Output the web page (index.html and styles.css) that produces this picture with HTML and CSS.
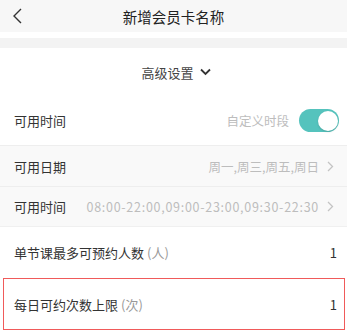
FILE: index.html
```html
<!DOCTYPE html>
<html lang="zh">
<head>
<meta charset="utf-8">
<link rel="stylesheet" href="styles.css">
</head>
<body>
<div class="page">
  <header class="nav">
    <svg class="back" width="12" height="16" viewBox="0 0 12 16"><path d="M9 1 L2 8 L9 15" fill="none" stroke="#333" stroke-width="1.4"/></svg>
    <div class="title">新增会员卡名称</div>
  </header>
  <div class="gap"></div>
  <div class="band"></div>
  <div class="section-toggle">
    <span>高级设置</span>
    <svg width="13" height="8" viewBox="0 0 13 8"><path d="M2 1.5 L6.5 6 L11 1.5" fill="none" stroke="#333" stroke-width="1.8"/></svg>
  </div>
  <div class="row row-switch">
    <span class="label">可用时间</span>
    <span class="value">自定义时段</span>
    <span class="switch"><span class="knob"></span></span>
  </div>
  <div class="row row-sub">
    <span class="label">可用日期</span>
    <span class="value">周一,周三,周五,周日</span>
    <svg class="chev" width="7" height="11" viewBox="0 0 7 11"><path d="M1 1 L5.5 5.5 L1 10" fill="none" stroke="#c4c4c4" stroke-width="1.3"/></svg>
  </div>
  <div class="row row-sub last">
    <span class="label">可用时间</span>
    <span class="value times">08:00-22:00,09:00-23:00,09:30-22:30</span>
    <svg class="chev" width="7" height="11" viewBox="0 0 7 11"><path d="M1 1 L5.5 5.5 L1 10" fill="none" stroke="#c4c4c4" stroke-width="1.3"/></svg>
  </div>
  <div class="row row-num">
    <span class="label">单节课最多可预约人数<span class="unit">(人)</span></span>
    <span class="num">1</span>
  </div>
  <div class="row row-num highlight">
    <span class="label">每日可约次数上限<span class="unit">(次)</span></span>
    <span class="num">1</span>
  </div>
</div>
</body>
</html>
```
FILE: styles.css
```css
* { box-sizing: border-box; }
html, body { margin: 0; padding: 0; background: #fff; }
body {
  font-family: "Noto Sans CJK SC", "Liberation Sans", sans-serif;
  color: #333;
  width: 347px;
  height: 332px;
  overflow: hidden;
}
.page { display: flex; flex-direction: column; }
.nav {
  height: 32px;
  background: #f7f7f7;
  display: flex;
  align-items: center;
  justify-content: center;
  position: relative;
}
.back { position: absolute; left: 12px; top: 8px; }
.title { font-size: 14.5px; color: #222; }
.gap { height: 6px; background: #fff; }
.band { height: 10px; background: #f3f3f3; }
.section-toggle {
  height: 48px;
  display: flex;
  align-items: center;
  justify-content: center;
  gap: 5px;
  padding-left: 6px;
  font-size: 13px;
  color: #444;
}
.row {
  display: flex;
  align-items: center;
  padding: 0 10px 0 14px;
  font-size: 13px;
}
.label { color: #333; flex: none; }
.value { margin-left: auto; color: #bdbdbd; font-size: 12.5px; }
.row-switch { height: 49px; padding-right: 8px; }
.row-switch .value { margin-right: 10px; }
.switch {
  width: 40px;
  height: 23px;
  border-radius: 12px;
  background: #55c3bd;
  position: relative;
  flex: none;
}
.knob {
  position: absolute;
  right: 1.5px;
  top: 1.5px;
  width: 20px;
  height: 20px;
  border-radius: 50%;
  background: #fff;
  box-shadow: 0 1px 2px rgba(0,0,0,0.15);
}
.row-sub {
  height: 41px;
  background: #f9f9f9;
  border-top: 1px solid #eeeeee;
  padding-right: 13px;
}
.row-sub.last { height: 41px; border-bottom: 1px solid #f0f0f0; }
.chev { margin-left: 8px; flex: none; }
.times { letter-spacing: 0.72px; }
.row-num { height: 51px; }
.unit { color: #999; margin-left: 3px; }
.num { margin-left: auto; color: #333; font-size: 13px; }
.highlight {
  height: 52px;
  border: 1.5px solid #f05a5a;
  margin: 0 2px 0 3px;
  padding-left: 10px;
  padding-right: 7px;
}
```
